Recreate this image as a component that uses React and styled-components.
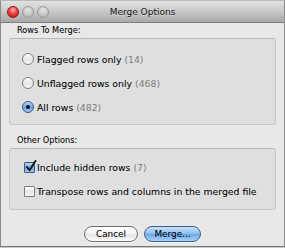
import styled, { createGlobalStyle } from "styled-components";

const GlobalStyle = createGlobalStyle`
  html, body {
    margin: 0;
    padding: 0;
    background: #c9c9c9;
  }
  * {
    box-sizing: border-box;
  }
`;

const Window = styled.div`
  width: 285px;
  height: 247px;
  display: flex;
  flex-direction: column;
  border: 1px solid #8c8c8c;
  border-top-color: #b8b8b8;
  border-bottom-color: #777;
  background: #e8e8e8;
  font-family: "DejaVu Sans", "Liberation Sans", sans-serif;
  color: #000;
  -webkit-text-stroke: 0.06px #000;
`;

const TitleBar = styled.div`
  height: 22px;
  flex: none;
  display: flex;
  align-items: center;
  position: relative;
  background: linear-gradient(#e2e2e2, #c8c8c8 50%, #a8a8a8);
  border-bottom: 1px solid #7e7e7e;
`;

const Lights = styled.div`
  display: flex;
  gap: 3px;
  padding-left: 6px;
`;

const Light = styled.span`
  width: 12px;
  height: 12px;
  border-radius: 50%;
  border: 1px solid ${({ $red }) => ($red ? "#8e1616" : "#9b9b9b")};
  background: ${({ $red }) =>
    $red
      ? "radial-gradient(circle at 50% 30%, #ffb7b7 0, #ee4040 45%, #c41010 100%)"
      : "radial-gradient(circle at 50% 30%, #e6e6e6 0, #c6c6c6 55%, #b0b0b0 100%)"};
`;

const Title = styled.div`
  position: absolute;
  left: 0;
  right: 0;
  text-align: center;
  font-size: 9px;
  color: #1a1a1a;
  text-shadow: 0 1px 0 rgba(255, 255, 255, 0.45);
  pointer-events: none;
`;

const Body = styled.div`
  flex: 1;
  display: flex;
  flex-direction: column;
  padding: 1px 8px 0;
`;

const GroupLabel = styled.div`
  font-size: 8.2px;
  line-height: 10px;
  padding-left: 8px;
  margin-top: ${({ $top }) => $top}px;
  margin-bottom: 3px;
`;

const Group = styled.div`
  border: 1px solid #c8c8c8;
  border-top-color: #b9b9b9;
  border-radius: 3px;
  background: #dfdfdf;
  padding: ${({ $pad }) => $pad};
  display: flex;
  flex-direction: column;
`;

const Row = styled.div`
  height: 24px;
  display: flex;
  align-items: center;
  padding-left: 12px;
  font-size: 9.3px;
`;

const Count = styled.span`
  color: #7c7c7c;
  -webkit-text-stroke: 0;
  margin-left: 3px;
`;

const Radio = styled.span`
  width: 12px;
  height: 12px;
  flex: none;
  border-radius: 50%;
  margin-right: 3px;
  display: flex;
  align-items: center;
  justify-content: center;
  border: 1px solid ${({ $on }) => ($on ? "#3b5a86" : "#7e7e7e")};
  background: ${({ $on }) =>
    $on
      ? "linear-gradient(#b9d6f4, #6aa6e4 55%, #9cc8f2)"
      : "linear-gradient(#ffffff, #e6e6e6 50%, #f6f6f6)"};
  &::after {
    content: "";
    display: ${({ $on }) => ($on ? "block" : "none")};
    width: 4px;
    height: 4px;
    border-radius: 50%;
    background: #111;
  }
`;

const Check = styled.span`
  width: 11px;
  height: 11px;
  flex: none;
  margin: 0 2px 0 2px;
  border-radius: 1px;
  position: relative;
  border: 1px solid ${({ $on }) => ($on ? "#3b5a86" : "#7e7e7e")};
  background: ${({ $on }) =>
    $on
      ? "linear-gradient(#b9d6f4, #6aa6e4 55%, #9cc8f2)"
      : "linear-gradient(#ffffff, #e6e6e6 50%, #f6f6f6)"};
  svg {
    position: absolute;
    left: 0px;
    top: -3px;
  }
`;

const Buttons = styled.div`
  display: flex;
  justify-content: center;
  gap: 6px;
  margin-top: 16px;
`;

const Button = styled.div`
  width: ${({ $w }) => $w}px;
  height: 16px;
  border-radius: 8px;
  display: flex;
  align-items: center;
  justify-content: center;
  font-size: 8.9px;
  border: 1px solid ${({ $primary }) => ($primary ? "#3c5f8e" : "#6e6e6e")};
  background: ${({ $primary }) =>
    $primary
      ? "linear-gradient(#c9e1f8, #8dbcee 50%, #6aa6e8 51%, #a9d2fa)"
      : "linear-gradient(#ffffff, #f2f2f2 50%, #e4e4e4 51%, #fbfbfb)"};
  box-shadow: 0 1px 0 rgba(255, 255, 255, 0.6);
`;

function CheckMark() {
  return (
    <svg width="12" height="13" viewBox="0 0 12 13">
      <path
        d="M2 7 L4.5 10.3 L10.5 1"
        fill="none"
        stroke="#111"
        strokeWidth="1.9"
        strokeLinecap="round"
        strokeLinejoin="round"
      />
    </svg>
  );
}

export default function App() {
  return (
    <>
      <GlobalStyle />
      <Window>
        <TitleBar>
          <Lights>
            <Light $red />
            <Light />
            <Light />
          </Lights>
          <Title>Merge Options</Title>
        </TitleBar>
        <Body>
          <GroupLabel $top={1}>Rows To Merge:</GroupLabel>
          <Group $pad="8px 0 5px">
            <Row>
              <Radio />
              Flagged rows only<Count>(14)</Count>
            </Row>
            <Row>
              <Radio />
              Unflagged rows only<Count>(468)</Count>
            </Row>
            <Row>
              <Radio $on />
              All rows<Count>(482)</Count>
            </Row>
          </Group>
          <GroupLabel $top={10}>Other Options:</GroupLabel>
          <Group $pad="6px 0 6px">
            <Row>
              <Check $on>
                <CheckMark />
              </Check>
              Include hidden rows<Count>(7)</Count>
            </Row>
            <Row>
              <Check />
              Transpose rows and columns in the merged file
            </Row>
          </Group>
          <Buttons>
            <Button $w={54}>Cancel</Button>
            <Button $w={57} $primary>
              Merge...
            </Button>
          </Buttons>
        </Body>
      </Window>
    </>
  );
}
